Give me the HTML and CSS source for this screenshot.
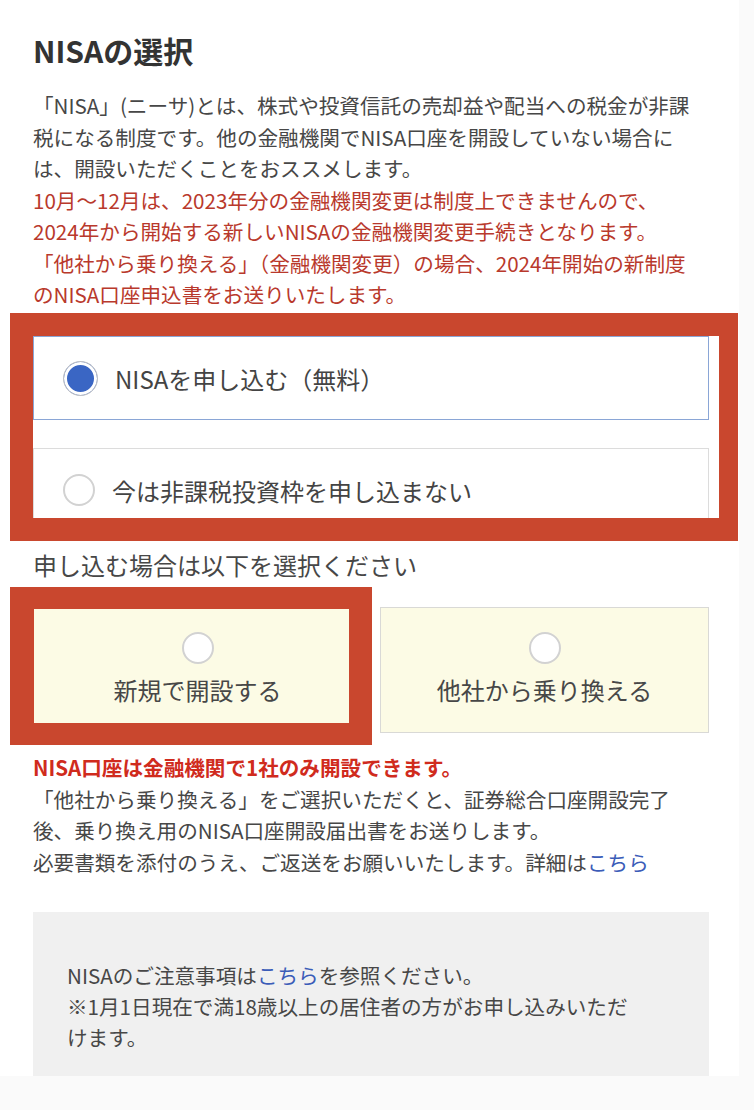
FILE: index.html
```html
<!DOCTYPE html>
<html lang="ja">
<head>
    <meta charset="utf-8">
    <title>NISAの選択</title>
    <link rel="stylesheet" href="styles.css">
</head>
<body>
    <div class="page">
        <h1 class="title">NISAの選択</h1>
        <p class="lead">
            「NISA」(ニーサ)とは、株式や投資信託の売却益や配当への税金が非課<br>税になる制度です。他の金融機関でNISA口座を開設していない場合に<br>は、開設いただくことをおススメします。<br>
            <span class="alert">10月〜12月は、2023年分の金融機関変更は制度上できませんので、<br>2024年から開始する新しいNISAの金融機関変更手続きとなります。<br>「他社から乗り換える」（金融機関変更）の場合、2024年開始の新制度<br>のNISA口座申込書をお送りいたします。</span>
        </p>

        <div class="options">
            <label class="option option-selected">
                <span class="radio radio-checked"></span>
                NISAを申し込む（無料）
            </label>
            <label class="option">
                <span class="radio"></span>
                今は非課税投資枠を申し込まない
            </label>
        </div>

        <p class="prompt">申し込む場合は以下を選択ください</p>
        <div class="choices">
            <div class="choice choice-marked">
                <span class="radio"></span>
                <span class="choice-label">新規で開設する</span>
            </div>
            <div class="choice">
                <span class="radio"></span>
                <span class="choice-label">他社から乗り換える</span>
            </div>
        </div>

        <p class="note">
            <strong class="warn">NISA口座は金融機関で1社のみ開設できます。</strong><br>
            「他社から乗り換える」をご選択いただくと、証券総合口座開設完了<br>後、乗り換え用のNISA口座開設届出書をお送りします。<br>必要書類を添付のうえ、ご返送をお願いいたします。詳細は<a href="#">こちら</a>
        </p>

        <div class="info">
            <p>NISAのご注意事項は<a href="#">こちら</a>を参照ください。<br>※1月1日現在で満18歳以上の居住者の方がお申し込みいただ<br>けます。</p>
        </div>
    </div>
</body>
</html>
```

FILE: styles.css
```css
:root {
    --color-text: #474747;
    --color-title: #333;
    --color-alert: #b9392c;
    --color-warn: #d02b1d;
    --color-link: #3b5cb8;
    --color-mark: #c9472e;
    --color-cream: #fcfbe5;
}

body {
    margin: 0;
    background-color: #fafafa;
    color: var(--color-text);
    font-family: "Noto Sans CJK JP", "Noto Sans", sans-serif;
}
.page {
    width: 739px;
    box-sizing: border-box;
    padding: 30px 30px 0 33px;
    background-color: #fff;
}
.title {
    margin: 0;
    font-size: 30px;
    line-height: 40px;
    font-weight: bold;
    color: var(--color-title);
}
.lead {
    margin: 20px -20px 0 0;
    font-size: 20.6px;
    line-height: 31.5px;
}
.alert {
    color: var(--color-alert);
}

/* radio buttons */
.radio {
    flex: none;
    display: inline-block;
    width: 32px;
    height: 32px;
    box-sizing: border-box;
    border: 2px solid #d2d2d2;
    border-radius: 50%;
    background-color: #fff;
}
.radio-checked {
    width: 35px;
    height: 35px;
    border: 1px solid #c4c4c4;
    background-color: #3a66c4;
    box-shadow: inset 0 0 0 3px #fff;
}

.options {
    position: relative;
    margin-top: 25.5px;
}
.options::after {
    content: "";
    position: absolute;
    top: -23px;
    left: -23px;
    right: -29px;
    bottom: -9px;
    border: solid var(--color-mark);
    border-width: 23px 19px 23px 23px;
}
.option {
    display: flex;
    align-items: center;
    gap: 17px;
    height: 84px;
    box-sizing: border-box;
    padding-left: 29px;
    border: 1px solid #dcdcdc;
    background-color: #fff;
    font-size: 24px;
    color: #444;
}
.option + .option {
    margin-top: 28px;
}
.option-selected {
    border-color: #8aa6d6;
}

.prompt {
    margin: 17px 0 0;
    font-size: 24px;
    line-height: 32px;
}
.choices {
    display: grid;
    grid-template-columns: 1fr 1fr;
    gap: 18px;
    margin-top: 26px;
}
.choice {
    position: relative;
    display: flex;
    flex-direction: column;
    align-items: center;
    gap: 10px;
    height: 126px;
    box-sizing: border-box;
    padding-top: 24px;
    border: 1px solid #d9d9d6;
    background-color: var(--color-cream);
}
.choice-label {
    font-size: 24px;
    line-height: 32px;
}
.choice-marked::after {
    content: "";
    position: absolute;
    top: -21px;
    left: -24px;
    right: -11px;
    bottom: -13px;
    border: solid var(--color-mark);
    border-width: 22px 23px 22px 24px;
}

.note {
    margin: 19px 0 0;
    font-size: 20.6px;
    line-height: 31.5px;
}
.warn {
    color: var(--color-warn);
}
a {
    color: var(--color-link);
    text-decoration: none;
}

.info {
    margin-top: 34px;
    padding: 48px 34px 23px;
    background-color: #f0f0f0;
}
.info p {
    margin: 0;
    font-size: 20.6px;
    line-height: 31px;
}
```
